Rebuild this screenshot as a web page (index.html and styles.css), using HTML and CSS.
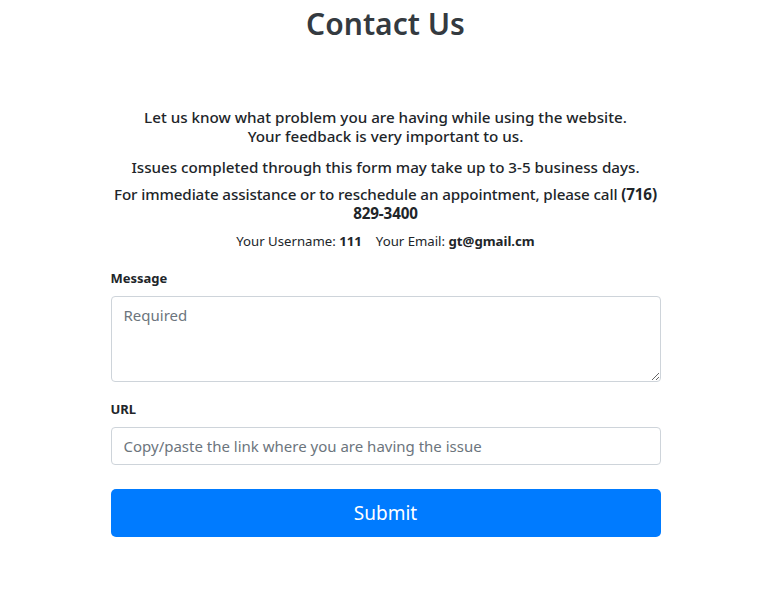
FILE: index.html
```html
<!DOCTYPE html>
<html>
<head>
<meta charset="utf-8">
<link rel="stylesheet" href="styles.css">
</head>
<body>
<main class="page">
  <h2 class="title">Contact Us</h2>
  <section class="intro">
    <h6 class="lead first">Let us know what problem you are having while using the website.<br>Your feedback is very important to us.</h6>
    <h6 class="lead">Issues completed through this form may take up to 3-5 business days.</h6>
    <h6 class="lead tight">For immediate assistance or to reschedule an appointment, please call <b>(716)</b> <b>829-3400</b></h6>
    <p class="user">Your Username: <b>111</b><span class="sep"></span>Your Email: <b>gt@gmail.cm</b></p>
  </section>
  <form class="form">
    <div class="group">
      <label class="label" for="msg">Message</label>
      <textarea id="msg" class="control area" placeholder="Required"></textarea>
    </div>
    <div class="group">
      <label class="label" for="url">URL</label>
      <input id="url" class="control" type="text" placeholder="Copy/paste the link where you are having the issue">
    </div>
    <button type="button" class="btn">Submit</button>
  </form>
</main>
</body>
</html>
```
FILE: styles.css
```css
* { box-sizing: border-box; }
body {
  margin: 0;
  padding-left: 8px;
  font-family: "Noto Sans", "Open Sans", sans-serif;
  color: #212529;
  background: #fff;
}
.page {
  width: 550px;
  margin: 0 auto;
  display: flex;
  flex-direction: column;
}
.title {
  margin: 5px 0 0;
  text-align: center;
  font-size: 30px;
  font-weight: 600;
  line-height: 38px;
  color: #343a40;
}
.intro {
  margin-top: 65px;
  text-align: center;
  display: flex;
  flex-direction: column;
}
.lead {
  margin: 0 0 8px;
  font-size: 15.2px;
  font-weight: 500;
  line-height: 19px;
}
.lead.first { margin-bottom: 12px; }
.lead.tight { letter-spacing: -0.12px; }
.lead b { font-weight: 700; }
.user {
  margin: 1px 0 0;
  font-size: 13.2px;
  line-height: 19px;
}
.user b { font-weight: 700; }
.sep { display: inline-block; width: 14px; }
.form {
  margin-top: 17px;
  display: flex;
  flex-direction: column;
}
.group {
  display: flex;
  flex-direction: column;
  margin-bottom: 17px;
}
.group + .group { margin-bottom: 24px; }
.label {
  font-size: 13px;
  font-weight: 700;
  line-height: 20px;
  margin-bottom: 8px;
}
.control {
  width: 100%;
  height: 38px;
  padding: 6px 12px;
  font-family: inherit;
  font-size: 15px;
  line-height: 24px;
  color: #495057;
  border: 1px solid #ced4da;
  border-radius: 4px;
  background: #fff;
}
.control::placeholder { color: #6c757d; }
.area {
  height: 86px;
  resize: vertical;
  display: block;
}
.btn {
  height: 48px;
  width: 100%;
  border: 0;
  border-radius: 5px;
  background: #007bff;
  color: #fff;
  font-family: inherit;
  font-size: 19px;
  line-height: 24px;
}
```
